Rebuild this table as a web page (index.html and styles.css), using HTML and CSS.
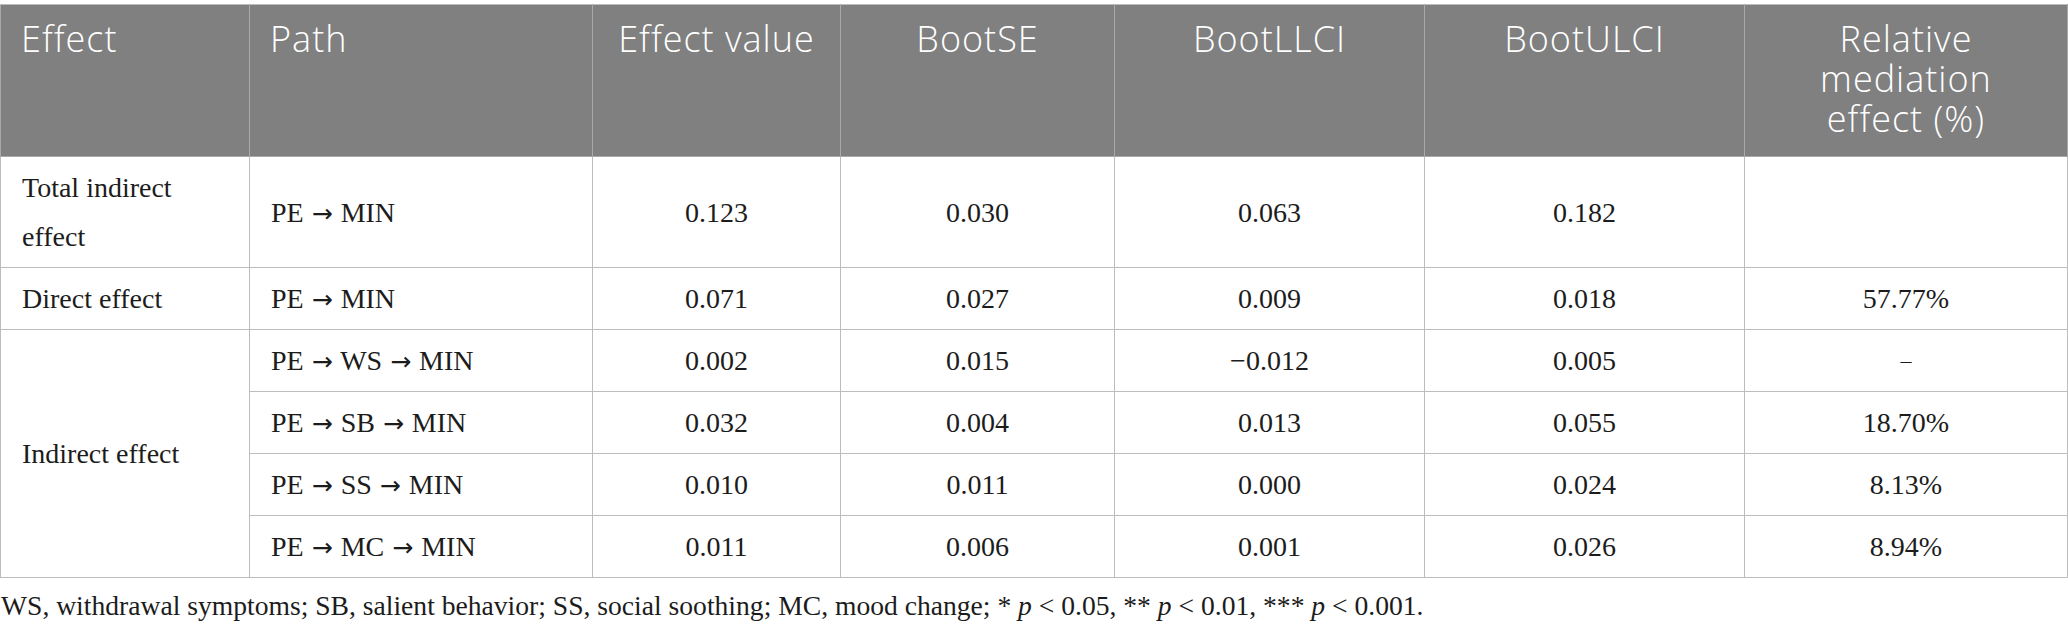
FILE: index.html
```html
<!DOCTYPE html>
<html lang="en">
<head>
<meta charset="utf-8">
<title>Mediation effect table</title>
<link rel="stylesheet" href="styles.css">
</head>
<body>
<div class="wrap">
  <table class="med-table">
    <colgroup>
      <col class="c-effect">
      <col class="c-path">
      <col class="c-val">
      <col class="c-se">
      <col class="c-ll">
      <col class="c-ul">
      <col class="c-rel">
    </colgroup>
    <thead>
      <tr>
        <th class="left">Effect</th>
        <th class="left">Path</th>
        <th>Effect value</th>
        <th>BootSE</th>
        <th>BootLLCI</th>
        <th>BootULCI</th>
        <th>Relative<br>mediation<br>effect (%)</th>
      </tr>
    </thead>
    <tbody>
      <tr class="tall">
        <td class="left">Total indirect<br>effect</td>
        <td class="left">PE <span class="arr">→</span> MIN</td>
        <td>0.123</td>
        <td>0.030</td>
        <td>0.063</td>
        <td>0.182</td>
        <td></td>
      </tr>
      <tr>
        <td class="left">Direct effect</td>
        <td class="left">PE <span class="arr">→</span> MIN</td>
        <td>0.071</td>
        <td>0.027</td>
        <td>0.009</td>
        <td>0.018</td>
        <td>57.77%</td>
      </tr>
      <tr>
        <td class="left" rowspan="4">Indirect effect</td>
        <td class="left">PE <span class="arr">→</span> WS <span class="arr">→</span> MIN</td>
        <td>0.002</td>
        <td>0.015</td>
        <td>−0.012</td>
        <td>0.005</td>
        <td class="dash">–</td>
      </tr>
      <tr>
        <td class="left">PE <span class="arr">→</span> SB <span class="arr">→</span> MIN</td>
        <td>0.032</td>
        <td>0.004</td>
        <td>0.013</td>
        <td>0.055</td>
        <td>18.70%</td>
      </tr>
      <tr>
        <td class="left">PE <span class="arr">→</span> SS <span class="arr">→</span> MIN</td>
        <td>0.010</td>
        <td>0.011</td>
        <td>0.000</td>
        <td>0.024</td>
        <td>8.13%</td>
      </tr>
      <tr>
        <td class="left">PE <span class="arr">→</span> MC <span class="arr">→</span> MIN</td>
        <td>0.011</td>
        <td>0.006</td>
        <td>0.001</td>
        <td>0.026</td>
        <td>8.94%</td>
      </tr>
    </tbody>
  </table>
  <p class="note">WS, withdrawal symptoms; SB, salient behavior; SS, social soothing; MC, mood change; * <i>p</i> &lt; 0.05, ** <i>p</i> &lt; 0.01, *** <i>p</i> &lt; 0.001.</p>
</div>
</body>
</html>
```

FILE: styles.css
```css
html, body {
  margin: 0;
  padding: 0;
  background: #ffffff;
}

.wrap {
  padding-top: 4px;
}

.med-table {
  border-collapse: collapse;
  table-layout: fixed;
  width: 2067px;
  font-family: "Liberation Serif", "Times New Roman", serif;
  color: #1c1c1c;
}

.c-effect { width: 249px; }
.c-path { width: 343px; }
.c-val { width: 248px; }
.c-se { width: 274px; }
.c-ll { width: 310px; }
.c-ul { width: 320px; }
.c-rel { width: 323px; }

.med-table th,
.med-table td {
  border: 1px solid #bdbdbd;
}

.med-table th {
  background: #7f807f;
  color: #ffffff;
  font-family: "Open Sans", "Noto Sans", sans-serif;
  font-weight: 300;
  font-size: 36px;
  line-height: 40px;
  letter-spacing: 1px;
  padding: 14px 10px 17px;
  text-align: center;
  vertical-align: top;
  border-color: #a9a9a9;
}

.med-table thead tr th {
  border-top-color: #bdbdbd;
}

.med-table th.left {
  text-align: left;
  padding-left: 20px;
}

.med-table td {
  font-size: 28px;
  line-height: 49px;
  padding: 6px 12px;
  text-align: center;
  vertical-align: middle;
}

.med-table td.left {
  text-align: left;
  padding-left: 21px;
}

.arr {
  font-family: "DejaVu Sans", sans-serif;
  font-size: 25px;
  line-height: 0;
  padding: 0 1px;
}

.med-table td.dash {
  font-size: 22px;
}

.note {
  margin: 10px 0 0 1px;
  font-family: "Liberation Serif", "Times New Roman", serif;
  font-size: 27.6px;
  line-height: 36px;
  color: #1c1c1c;
}
```
